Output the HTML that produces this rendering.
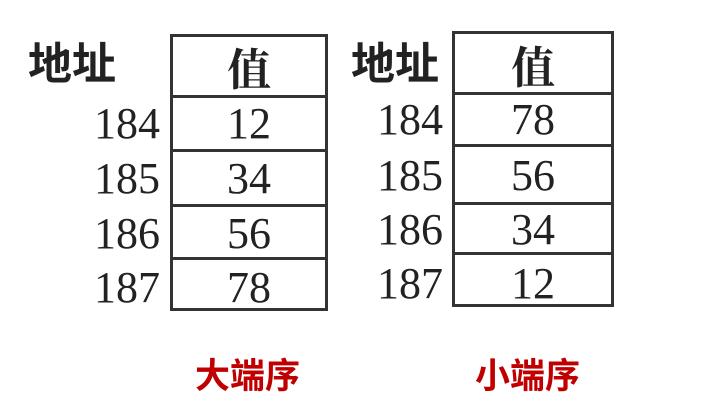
<!DOCTYPE html>
<html><head><meta charset="utf-8"><style>
body{margin:0;width:709px;height:417px;background:#fff;position:relative;overflow:hidden;font-family:"Liberation Serif","Noto Serif CJK SC",serif;color:#222}
.t{position:absolute;border:3px solid #333;box-sizing:border-box}
.l{position:absolute;left:0;right:0;height:3px;background:#333}
.c{position:absolute;text-align:center;font-size:44px;line-height:1}
.n{position:absolute;font-size:44px;line-height:1;text-align:right}
.h{position:absolute;font-size:44px;font-family:"Noto Sans CJK SC",sans-serif;font-weight:bold;line-height:1;color:#222}
.r{position:absolute;color:#c00000;font-family:"Noto Sans CJK SC",sans-serif;font-weight:bold;font-size:35px;line-height:1}
</style></head><body>
<div class="h" style="left:28px;top:38px">地址</div>
<div class="t" style="left:170px;top:34px;width:158px;height:277px">
<div class="l" style="top:58px"></div><div class="l" style="top:112px"></div><div class="l" style="top:167px"></div><div class="l" style="top:220px"></div>
</div>
<div class="c" style="left:170px;width:158px;top:44px;font-family:'Noto Serif CJK SC',serif;font-weight:bold">值</div>
<div class="c" style="left:170px;width:158px;top:102px">12</div>
<div class="c" style="left:170px;width:158px;top:157px">34</div>
<div class="c" style="left:170px;width:158px;top:212px">56</div>
<div class="c" style="left:170px;width:158px;top:266px">78</div>
<div class="n" style="right:549px;top:102px">184</div>
<div class="n" style="right:549px;top:157px">185</div>
<div class="n" style="right:549px;top:212px">186</div>
<div class="n" style="right:549px;top:266px">187</div>

<div class="h" style="left:351px;top:38px">地址</div>
<div class="t" style="left:452px;top:31px;width:162px;height:276px">
<div class="l" style="top:58px"></div><div class="l" style="top:110px"></div><div class="l" style="top:168px"></div><div class="l" style="top:218px"></div>
</div>
<div class="c" style="left:452px;width:162px;top:42px;font-family:'Noto Serif CJK SC',serif;font-weight:bold">值</div>
<div class="c" style="left:452px;width:162px;top:98px">78</div>
<div class="c" style="left:452px;width:162px;top:154px">56</div>
<div class="c" style="left:452px;width:162px;top:208px">34</div>
<div class="c" style="left:452px;width:162px;top:262px">12</div>
<div class="n" style="right:266px;top:98px">184</div>
<div class="n" style="right:266px;top:154px">185</div>
<div class="n" style="right:266px;top:208px">186</div>
<div class="n" style="right:266px;top:262px">187</div>

<div class="r" style="left:195px;top:356px">大端序</div>
<div class="r" style="left:475px;top:356px">小端序</div>
</body></html>
